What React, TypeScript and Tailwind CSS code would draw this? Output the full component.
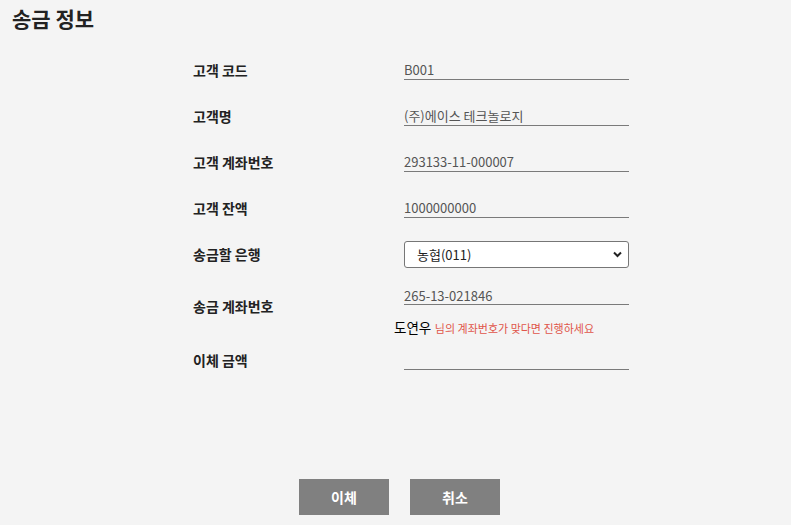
import React from "react";

const font = { fontFamily: '"Noto Sans CJK KR", "Noto Sans", sans-serif' };

function Row({ label, children, h }: { label: string; children: React.ReactNode; h: string }) {
  return (
    <div className={`flex items-center ${h}`}>
      <div className="w-[211px] text-[14px] font-bold text-[#222]">{label}</div>
      <div className="w-[225px]">{children}</div>
    </div>
  );
}

function Field({ value }: { value: string }) {
  return (
    <input
      readOnly
      value={value}
      className="block w-[225px] h-[19px] border-0 border-b border-[#7a7a7a] bg-transparent text-[13px] text-[#555] outline-none px-0 leading-[18px]"
    />
  );
}

export default function App() {
  return (
    <div className="min-h-[525px] w-full bg-[#f4f4f4]" style={font}>
      <div className="pl-[12px] pt-[5px] text-[21px] font-bold text-[#222] leading-[26px]">송금 정보</div>
      <div className="ml-[193px] mt-[16px]">
        <Row label="고객 코드" h="h-[46px]">
          <Field value="B001" />
        </Row>
        <Row label="고객명" h="h-[46px]">
          <Field value="(주)에이스 테크놀로지" />
        </Row>
        <Row label="고객 계좌번호" h="h-[46px]">
          <Field value="293133-11-000007" />
        </Row>
        <Row label="고객 잔액" h="h-[46px]">
          <Field value="1000000000" />
        </Row>
        <Row label="송금할 은행" h="h-[46px]">
          <div className="relative w-[225px] h-[27px]">
            <select className="appearance-none w-full h-full bg-white border border-[#767676] rounded-[3px] pl-[12px] text-[13px] text-[#222] outline-none">
              <option>농협(011)</option>
            </select>
            <svg className="absolute right-[7px] top-[10px] pointer-events-none" width="9" height="7" viewBox="0 0 9 7">
              <path d="M1 1.5 L4.5 5 L8 1.5" stroke="#222" strokeWidth="2" fill="none" />
            </svg>
          </div>
        </Row>
        <div className="flex items-center h-[58px]">
          <div className="w-[211px] text-[14px] font-bold text-[#222]">송금 계좌번호</div>
          <div className="w-[225px] self-start pt-[9px]">
            <Field value="265-13-021846" />
            <div className="mt-[12px] ml-[-10px] whitespace-nowrap leading-[18px]">
              <span className="text-[13.5px] text-black">도연우</span>{" "}
              <span className="text-[11px] text-[#e0554a]">님의 계좌번호가 맞다면 진행하세요</span>
            </div>
          </div>
        </div>
        <Row label="이체 금액" h="h-[50px]">
          <Field value="" />
        </Row>
      </div>
      <div className="flex justify-center gap-[21px] mt-[94px] pl-[8px]">
        <button className="w-[90px] h-[36px] bg-[#808080] text-white text-[14px] font-bold">이체</button>
        <button className="w-[90px] h-[36px] bg-[#808080] text-white text-[14px] font-bold">취소</button>
      </div>
    </div>
  );
}
